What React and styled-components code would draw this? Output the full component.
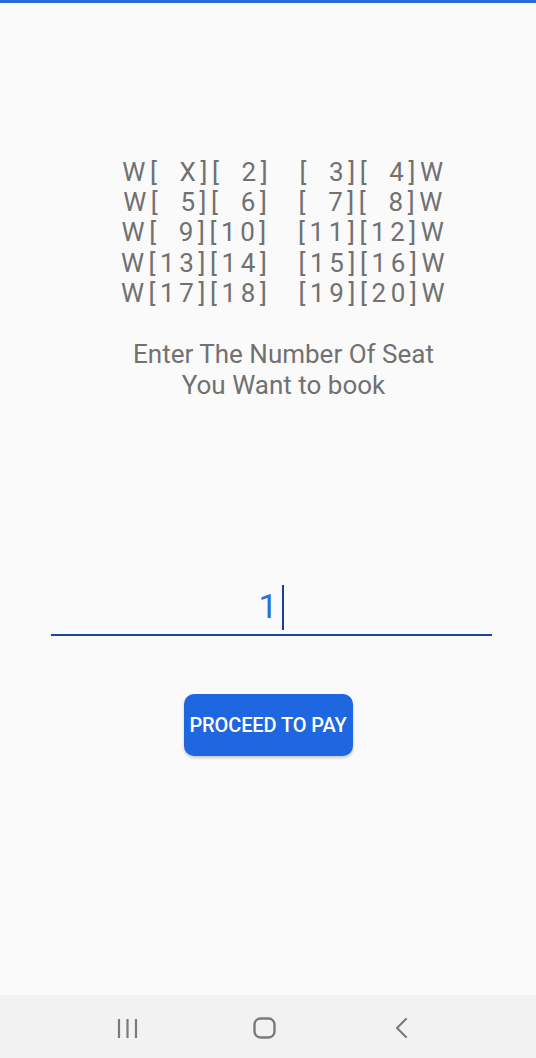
import React from 'react';
import styled, { createGlobalStyle } from 'styled-components';

const Global = createGlobalStyle`
  html, body {
    margin: 0;
    padding: 0;
    background: #fafafa;
  }
  body {
    font-family: Roboto, "Noto Sans", sans-serif;
  }
`;

const Screen = styled.div`
  display: flex;
  flex-direction: column;
  width: 536px;
  height: 1058px;
  background: #fafafa;
  border-top: 3px solid #2a6ad8;
  box-sizing: border-box;
`;

const Main = styled.main`
  flex: 1;
  display: flex;
  flex-direction: column;
  align-items: center;
`;

const SeatMap = styled.div`
  margin-top: 154px;
  padding-left: 34px;
  white-space: pre;
  text-align: center;
  font-size: 26px;
  line-height: 30.2px;
  letter-spacing: 4.6px;
  word-spacing: -2px;
  color: #717171;
`;

const Prompt = styled.div`
  margin-top: 31px;
  padding-left: 31px;
  text-align: center;
  font-size: 26px;
  line-height: 30.5px;
  color: #717171;
`;

const Field = styled.div`
  margin-top: 176px;
  margin-left: 6px;
  width: 441px;
  height: 50px;
  display: flex;
  justify-content: center;
  align-items: flex-end;
  border-bottom: 2px solid #1b47a3;
  box-sizing: content-box;
  padding-bottom: 8px;
  font-size: 34px;
  line-height: 40px;
  color: #2f70d8;
`;

const Caret = styled.span`
  display: inline-block;
  width: 2px;
  height: 45px;
  margin-left: 4px;
  margin-bottom: -4px;
  background: #1b3f99;
`;

const PayButton = styled.button`
  margin-top: 58px;
  width: 169px;
  height: 62px;
  border: none;
  border-radius: 10px;
  background: #1f66e1;
  color: #fff;
  font-family: Roboto, sans-serif;
  font-weight: 500;
  font-size: 20px;
  letter-spacing: -0.1px;
  padding: 0;
  box-shadow: 0 2px 3px rgba(0, 0, 0, 0.2);
`;

const NavBar = styled.nav`
  height: 63px;
  background: #f2f2f2;
  display: flex;
  align-items: center;
  justify-content: center;
  padding-top: 2px;
  padding-right: 7px;
  box-sizing: border-box;
`;

const NavSlot = styled.div`
  width: 137px;
  display: flex;
  justify-content: center;
`;

const NavIcon = styled.svg`
  display: block;
  width: ${(p) => p.w}px;
  height: 22px;
`;

const rows = [
  'W[  X][  2]   [  3][  4]W',
  'W[  5][  6]   [  7][  8]W',
  'W[  9][10]   [11][12]W',
  'W[13][14]   [15][16]W',
  'W[17][18]   [19][20]W',
];

export default function App() {
  return (
    <>
      <Global />
      <Screen>
        <Main>
          <SeatMap>{rows.join('\n')}</SeatMap>
          <Prompt>
            Enter The Number Of Seat
            <br />
            You Want to book
          </Prompt>
          <Field>
            1<Caret />
          </Field>
          <PayButton>PROCEED TO PAY</PayButton>
        </Main>
        <NavBar>
          <NavSlot>
            <NavIcon w={21} viewBox="0 0 21 22">
              <path d="M2 2v19M10.5 2v19M19 2v19" stroke="#7a7a7a" strokeWidth="2.2" fill="none" />
            </NavIcon>
          </NavSlot>
          <NavSlot>
            <NavIcon w={23} viewBox="0 0 23 22">
              <rect x="1.5" y="1.5" width="20" height="19" rx="6" stroke="#7a7a7a" strokeWidth="2.4" fill="none" />
            </NavIcon>
          </NavSlot>
          <NavSlot>
            <NavIcon w={13} viewBox="0 0 13 22">
              <path d="M11 2L2 11L11 20" stroke="#7a7a7a" strokeWidth="2.2" fill="none" strokeLinecap="round" strokeLinejoin="round" />
            </NavIcon>
          </NavSlot>
        </NavBar>
      </Screen>
    </>
  );
}
